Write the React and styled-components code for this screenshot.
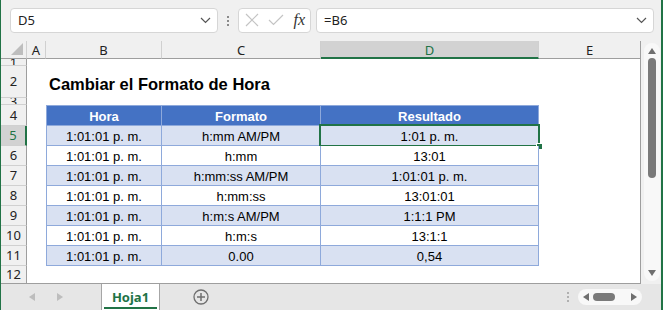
import React from 'react';
import styled, { createGlobalStyle } from 'styled-components';

const GlobalStyle = createGlobalStyle`
	html, body {
		margin: 0;
		padding: 0;
		background: #ffffff;
	}
	body {
		font-family: 'Liberation Sans', Arial, sans-serif;
	}
`;

const UI_FONT = "'Noto Sans', 'Liberation Sans', sans-serif";
const GREEN = '#217346';

const COLS = [26, 19, 116, 159, 218, 102];
const ROWS = [7, 32, 7, 21, 20, 20, 20, 20, 20, 20, 20, 18];

const HEADERS = ['Hora', 'Formato', 'Resultado'];
const DATA = [
	['1:01:01 p. m.', 'h:mm AM/PM', '1:01 p. m.'],
	['1:01:01 p. m.', 'h:mm', '13:01'],
	['1:01:01 p. m.', 'h:mm:ss AM/PM', '1:01:01 p. m.'],
	['1:01:01 p. m.', 'h:mm:ss', '13:01:01'],
	['1:01:01 p. m.', 'h:m:s AM/PM', '1:1:1 PM'],
	['1:01:01 p. m.', 'h:m:s', '13:1:1'],
	['1:01:01 p. m.', '0.00', '0,54'],
];

const Window = styled.div`
	width: 663px;
	height: 310px;
	box-sizing: border-box;
	border-left: 1px solid ${GREEN};
	border-right: 2px solid ${GREEN};
	display: flex;
	flex-direction: column;
	overflow: hidden;
	background: #f0f0f0;
`;

const FormulaBar = styled.div`
	height: 41px;
	flex: none;
	display: flex;
	align-items: center;
	padding: 0 7px 0 9px;
	box-sizing: border-box;
	background: #f0f0f0;
`;

const Field = styled.div`
	height: 25px;
	box-sizing: border-box;
	background: #ffffff;
	border: 1px solid #d6d6d6;
	border-radius: 4px;
	display: flex;
	align-items: center;
	font-family: ${UI_FONT};
	font-size: 13px;
	color: #222;
	width: ${(p) => p.$w}px;
	flex: ${(p) => (p.$grow ? 1 : 'none')};
	padding: 0 6px 0 7px;
	margin-bottom: 1px;
`;

const FieldText = styled.span`
	flex: 1;
`;

const Dots = styled.div`
	width: 20px;
	display: flex;
	flex-direction: column;
	align-items: center;
	gap: 2px;
	span {
		width: 2px;
		height: 2px;
		background: #8a8a8a;
	}
`;

const FxBox = styled(Field)`
	justify-content: space-between;
	padding: 0 5px 0 6px;
	margin-right: 5px;
`;

const Fx = styled.span`
	font-family: 'Liberation Serif', 'DejaVu Serif', serif;
	font-style: italic;
	font-size: 16px;
	color: #333;
`;

const Main = styled.div`
	flex: 1;
	display: flex;
	min-height: 0;
`;

const Sheet = styled.div`
	display: grid;
	grid-template-columns: ${COLS.map((c) => `${c}px`).join(' ')};
	grid-template-rows: 18px ${ROWS.map((r) => `${r}px`).join(' ')};
	width: 640px;
	background: #ffffff;
	border-right: 1px solid #9e9e9e;
	border-bottom: 1px solid #9e9e9e;
	box-sizing: border-box;
	overflow: hidden;
`;

const Corner = styled.div`
	background: #f0f0f0;
	border-bottom: 1px solid #9e9e9e;
	border-right: 1px solid #d0d0d0;
	position: relative;
	&::after {
		content: '';
		position: absolute;
		right: 3px;
		bottom: 3px;
		border-style: solid;
		border-width: 0 0 12px 12px;
		border-color: transparent transparent #bdbdbd transparent;
	}
`;

const ColHead = styled.div`
	background: ${(p) => (p.$active ? '#d2d2d2' : '#f0f0f0')};
	color: ${(p) => (p.$active ? GREEN : '#222')};
	border-right: 1px solid #d0d0d0;
	border-bottom: ${(p) => (p.$active ? `2px solid ${GREEN}` : '1px solid #9e9e9e')};
	display: flex;
	align-items: center;
	justify-content: center;
	font-family: ${UI_FONT};
	font-size: 13px;
	padding-top: ${(p) => (p.$active ? 1 : 0)}px;
	box-sizing: border-box;
`;

const RowHead = styled.div`
	background: ${(p) => (p.$active ? '#d2d2d2' : '#f0f0f0')};
	color: ${(p) => (p.$active ? GREEN : '#222')};
	border-right: ${(p) => (p.$active ? `2px solid ${GREEN}` : '1px solid #9e9e9e')};
	border-bottom: 1px solid #d0d0d0;
	display: flex;
	align-items: center;
	justify-content: center;
	font-family: ${UI_FONT};
	font-size: 13px;
	line-height: 1;
	overflow: hidden;
	box-sizing: border-box;
`;

const Cell = styled.div`
	position: relative;
	box-sizing: border-box;
	display: flex;
	align-items: center;
	justify-content: center;
	font-size: 13px;
	color: #000;
	white-space: nowrap;
	padding-top: 2px;
`;

const TableCell = styled(Cell)`
	background: ${(p) => (p.$head ? '#4472c4' : p.$band ? '#d9e1f2' : '#ffffff')};
	color: ${(p) => (p.$head ? '#ffffff' : '#000')};
	font-weight: ${(p) => (p.$head ? 700 : 400)};
	border-right: 1px solid #8ea9db;
	border-bottom: 1px solid #8ea9db;
	border-left: ${(p) => (p.$first ? '1px solid #8ea9db' : 'none')};
	border-top: ${(p) => (p.$head ? '1px solid #8ea9db' : 'none')};
`;

const Title = styled(Cell)`
	justify-content: flex-start;
	overflow: visible;
	font-size: 16.5px;
	font-weight: 700;
	padding: 5px 0 0 3px;
`;

const Selection = styled.div`
	position: absolute;
	left: -2px;
	top: -2px;
	right: -2px;
	bottom: -2px;
	border: 2px solid ${GREEN};
	pointer-events: none;
	&::after {
		content: '';
		position: absolute;
		right: -5px;
		bottom: -5px;
		width: 5px;
		height: 5px;
		background: ${GREEN};
		border: 1px solid #ffffff;
	}
`;

const VScroll = styled.div`
	flex: 1;
	background: #f0f0f0;
	display: flex;
	justify-content: center;
	padding: 2px 0 3px 2px;
`;

const ScrollTrack = styled.div`
	display: flex;
	flex-direction: ${(p) => (p.$horizontal ? 'row' : 'column')};
	align-items: center;
	background: #f8f8f8;
	border-radius: 8px;
	width: ${(p) => (p.$horizontal ? '64px' : '16px')};
	height: ${(p) => (p.$horizontal ? '16px' : 'auto')};
	padding: ${(p) => (p.$horizontal ? '0 5px' : '5px 0')};
	box-sizing: border-box;
	gap: 4px;
`;

const Arrow = styled.span`
	width: 0;
	height: 0;
	border-style: solid;
	flex: none;
	${(p) => p.$dir === 'up' && 'border-width: 0 4px 6px 4px; border-color: transparent transparent #6f6f6f transparent;'}
	${(p) => p.$dir === 'down' && 'border-width: 6px 4px 0 4px; border-color: #6f6f6f transparent transparent transparent;'}
	${(p) => p.$dir === 'left' && 'border-width: 4px 6px 4px 0; border-color: transparent #6f6f6f transparent transparent;'}
	${(p) => p.$dir === 'right' && 'border-width: 4px 0 4px 6px; border-color: transparent transparent transparent #6f6f6f;'}
	${(p) => p.$light && 'opacity: 0.35;'}
`;

const Thumb = styled.div`
	background: #7a7a7a;
	border-radius: 4px;
	width: ${(p) => (p.$horizontal ? '22px' : '8px')};
	height: ${(p) => (p.$horizontal ? '8px' : '120px')};
	flex: none;
`;

const Spacer = styled.div`
	flex: 1;
`;

const TabBar = styled.div`
	height: 26px;
	flex: none;
	display: flex;
	align-items: stretch;
	background: #e6e6e6;
	font-family: ${UI_FONT};
`;

const NavArrows = styled.div`
	width: 100px;
	display: flex;
	align-items: center;
	gap: 22px;
	padding-left: 28px;
	box-sizing: border-box;
`;

const Tab = styled.div`
	width: 59px;
	box-sizing: border-box;
	background: #ffffff;
	border-left: 1px solid #a6a6a6;
	border-right: 1px solid #a6a6a6;
	display: flex;
	align-items: center;
	justify-content: center;
	position: relative;
	color: ${GREEN};
	font-weight: 700;
	font-size: 13px;
	&::after {
		content: '';
		position: absolute;
		left: 2px;
		right: 2px;
		bottom: 1px;
		height: 2px;
		background: ${GREEN};
	}
`;

const AddSheet = styled.div`
	margin-left: 33px;
	align-self: center;
	display: flex;
`;

const HBar = styled.div`
	display: flex;
	align-items: center;
	gap: 9px;
	padding-right: 19px;
`;

const VDots = styled(Dots)`
	width: auto;
	span {
		background: #b0b0b0;
	}
`;

const Chevron = () => (
	<svg width='11' height='7' viewBox='0 0 11 7'>
		<path d='M1 1 L5.5 5.5 L10 1' fill='none' stroke='#555' strokeWidth='1.2' />
	</svg>
);

const Cross = () => (
	<svg width='14' height='14' viewBox='0 0 14 14'>
		<path d='M1 1 L13 13 M13 1 L1 13' stroke='#c4c4c4' strokeWidth='1.2' />
	</svg>
);

const Check = () => (
	<svg width='16' height='12' viewBox='0 0 16 12'>
		<path d='M1 6 L5.5 10.5 L15 1' fill='none' stroke='#c4c4c4' strokeWidth='1.2' />
	</svg>
);

const PlusCircle = () => (
	<svg width='16' height='16' viewBox='0 0 16 16'>
		<circle cx='8' cy='8' r='7' fill='none' stroke='#6f6f6f' strokeWidth='1.3' />
		<path d='M8 4 V12 M4 8 H12' stroke='#6f6f6f' strokeWidth='1.5' />
	</svg>
);

const COL_LETTERS = ['A', 'B', 'C', 'D', 'E'];

const renderRowCells = (rowNum) => {
	if (rowNum === 2) {
		return [
			<Cell key='a' />,
			<Title key='b'>Cambiar el Formato de Hora</Title>,
			<Cell key='c' />,
			<Cell key='d' />,
			<Cell key='e' />,
		];
	}
	if (rowNum >= 4 && rowNum <= 11) {
		const head = rowNum === 4;
		const values = head ? HEADERS : DATA[rowNum - 5];
		const band = !head && rowNum % 2 === 1;
		return [
			<Cell key='a' />,
			...values.map((v, i) => (
				<TableCell key={i} $head={head} $band={band} $first={i === 0}>
					{v}
					{rowNum === 5 && i === 2 && <Selection />}
				</TableCell>
			)),
			<Cell key='e' />,
		];
	}
	return COL_LETTERS.map((l) => <Cell key={l} />);
};

const App = () => (
	<>
		<GlobalStyle />
		<Window>
			<FormulaBar>
				<Field $w={208}>
					<FieldText>D5</FieldText>
					<Chevron />
				</Field>
				<Dots>
					<span />
					<span />
					<span />
				</Dots>
				<FxBox $w={73}>
					<Cross />
					<Check />
					<Fx>fx</Fx>
				</FxBox>
				<Field $grow>
					<FieldText>=B6</FieldText>
					<Chevron />
				</Field>
			</FormulaBar>
			<Main>
				<Sheet>
					<Corner />
					{COL_LETTERS.map((l) => (
						<ColHead key={l} $active={l === 'D'}>
							{l}
						</ColHead>
					))}
					{ROWS.map((_, idx) => {
						const rowNum = idx + 1;
						return (
							<React.Fragment key={rowNum}>
								<RowHead $active={rowNum === 5}>{rowNum}</RowHead>
								{renderRowCells(rowNum)}
							</React.Fragment>
						);
					})}
				</Sheet>
				<VScroll>
					<ScrollTrack>
						<Arrow $dir='up' />
						<Thumb />
						<Spacer />
						<Arrow $dir='down' />
					</ScrollTrack>
				</VScroll>
			</Main>
			<TabBar>
				<NavArrows>
					<Arrow $dir='left' $light />
					<Arrow $dir='right' $light />
				</NavArrows>
				<Tab>Hoja1</Tab>
				<AddSheet>
					<PlusCircle />
				</AddSheet>
				<Spacer />
				<HBar>
					<VDots>
						<span />
						<span />
						<span />
					</VDots>
					<ScrollTrack $horizontal>
						<Arrow $dir='left' />
						<Thumb $horizontal />
						<Spacer />
						<Arrow $dir='right' />
					</ScrollTrack>
				</HBar>
			</TabBar>
		</Window>
	</>
);

export default App;
